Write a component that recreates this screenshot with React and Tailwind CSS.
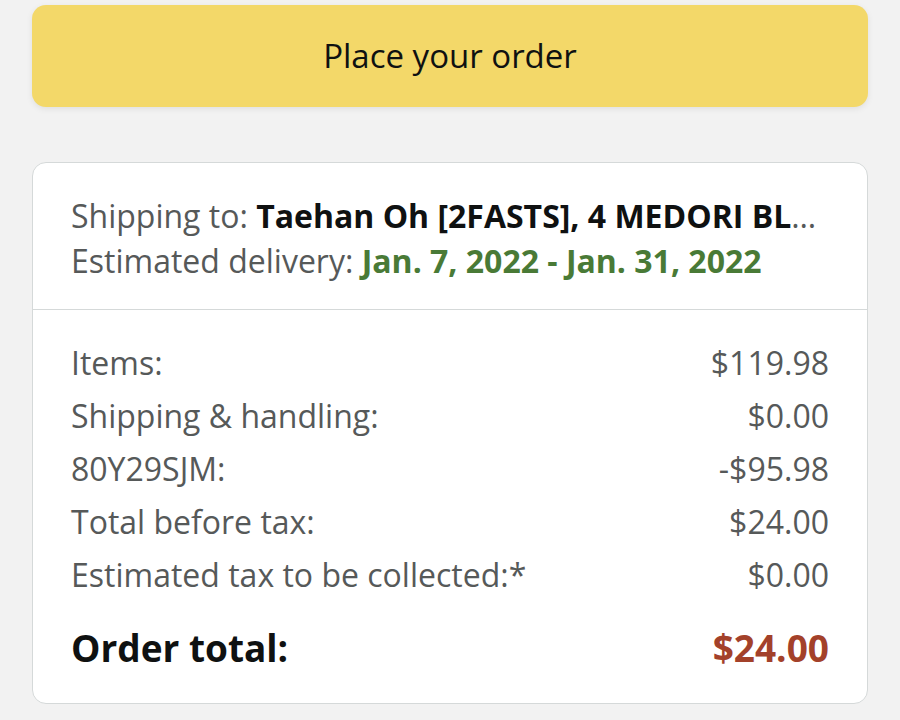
export default function App() {
  const rows = [
    ['Items:', '$119.98'],
    ['Shipping & handling:', '$0.00'],
    ['80Y29SJM:', '-$95.98'],
    ['Total before tax:', '$24.00'],
    ['Estimated tax to be collected:*', '$0.00'],
  ]

  return (
    <div className="min-h-[720px] bg-[#f2f2f2] px-[32px] pt-[5px] font-['Open_Sans',sans-serif]">
      {/* Place order button */}
      <button className="w-full h-[102px] rounded-[14px] bg-[#f3d869] text-[#0f1111] text-[33px] shadow-[0_2px_6px_rgba(0,0,0,0.08)]">
        Place your order
      </button>

      {/* Summary card */}
      <div className="mt-[55px] bg-white rounded-[14px] border border-[#d5d9d9]">
        <div className="px-[38px] pt-[30px] pb-[26px] text-[32px] leading-[45px] text-[#565959] border-b border-[#d5d9d9]">
          <div className="truncate">
            Shipping to: <span className="font-bold text-[#0f1111]">Taehan Oh [2FASTS], 4 MEDORI BLVD, PALM COAST</span>
          </div>
          <div className="whitespace-nowrap">
            Estimated delivery: <span className="font-bold text-[#497a36]">Jan. 7, 2022 - Jan. 31, 2022</span>
          </div>
        </div>

        <div className="px-[38px] pt-[26px] pb-[30px]">
          {rows.map(([label, value]) => (
            <div key={label} className="flex justify-between text-[32px] leading-[53px] text-[#565959]">
              <span>{label}</span>
              <span>{value}</span>
            </div>
          ))}
          <div className="flex justify-between mt-[22px] text-[37px] leading-[50px] font-bold">
            <span className="text-[#0f1111]">Order total:</span>
            <span className="text-[#a3412a]">$24.00</span>
          </div>
        </div>
      </div>
    </div>
  )
}
